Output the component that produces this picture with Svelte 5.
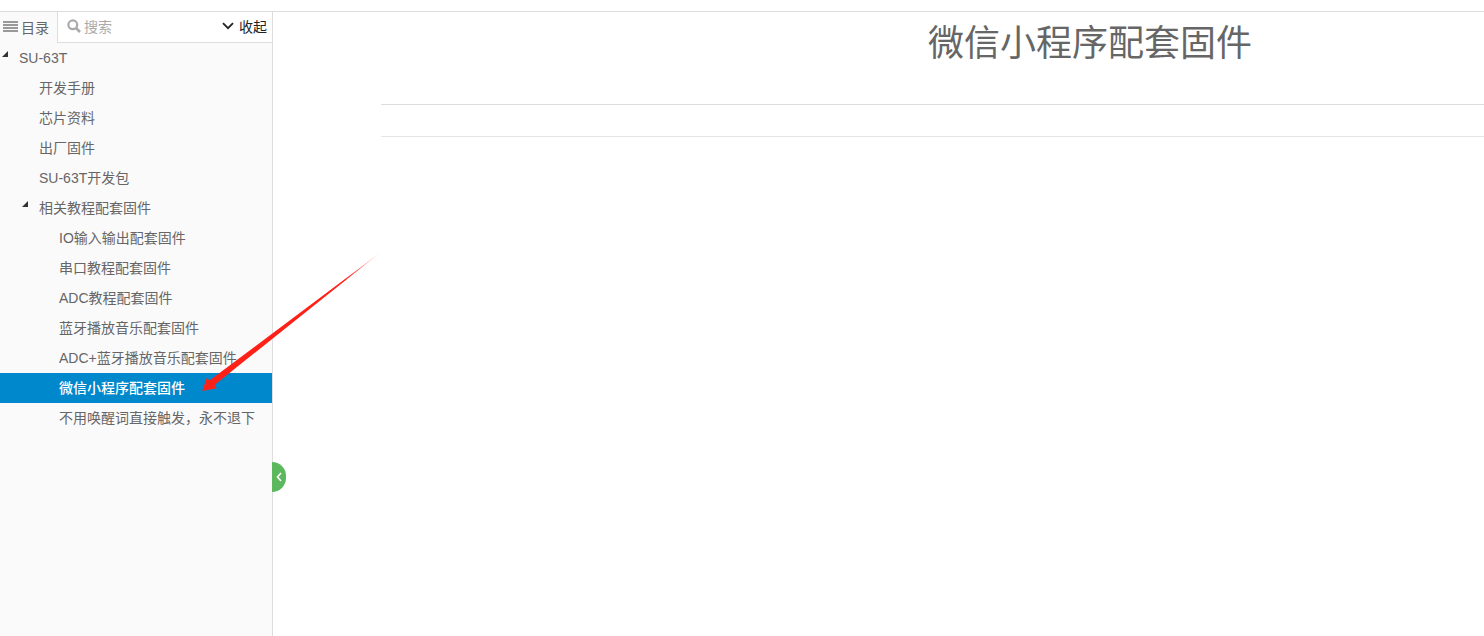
<script>
	const items = [
		{ label: 'SU-63T', level: 0, open: true },
		{ label: '开发手册', level: 1 },
		{ label: '芯片资料', level: 1 },
		{ label: '出厂固件', level: 1 },
		{ label: 'SU-63T开发包', level: 1 },
		{ label: '相关教程配套固件', level: 1, open: true },
		{ label: 'IO输入输出配套固件', level: 2 },
		{ label: '串口教程配套固件', level: 2 },
		{ label: 'ADC教程配套固件', level: 2 },
		{ label: '蓝牙播放音乐配套固件', level: 2 },
		{ label: 'ADC+蓝牙播放音乐配套固件', level: 2 },
		{ label: '微信小程序配套固件', level: 2, active: true },
		{ label: '不用唤醒词直接触发，永不退下', level: 2 }
	];
</script>

<div class="page">
	<aside class="sidebar">
		<div class="tabs">
			<div class="tab">
				<svg class="menu-icon" width="15" height="11" viewBox="0 0 15 11">
					<path d="M0 1h15M0 4h15M0 7h15M0 10h15" stroke="#999" stroke-width="2" />
				</svg>
				<span>目录</span>
			</div>
			<div class="search">
				<svg width="14" height="14" viewBox="0 0 14 14">
					<circle cx="5.8" cy="5.8" r="4.4" fill="none" stroke="#aaa" stroke-width="2.2" />
					<path d="M9 9l4 4" stroke="#aaa" stroke-width="2.6" />
				</svg>
				<span class="placeholder">搜索</span>
				<span class="collapse">
					<svg width="12" height="8" viewBox="0 0 12 8">
						<path d="M1 1.2l5 5 5-5" fill="none" stroke="#222" stroke-width="1.8" />
					</svg>
					收起
				</span>
			</div>
		</div>
		<ul class="tree">
			{#each items as item}
				<li class="node level-{item.level}" class:active={item.active}>
					{#if item.open}<i class="caret"></i>{/if}
					<span>{item.label}</span>
				</li>
			{/each}
		</ul>
		<div class="toggle">
			<svg width="6" height="10" viewBox="0 0 6 10">
				<path d="M5 1L1.5 5 5 9" fill="none" stroke="#fff" stroke-width="1.6" />
			</svg>
		</div>
	</aside>

	<main class="content">
		<h1>微信小程序配套固件</h1>
		<div class="meta"></div>
	</main>

	<svg class="arrow" width="190" height="150" viewBox="195 248 190 150">
		<defs>
			<linearGradient id="fade" gradientUnits="userSpaceOnUse" x1="381" y1="252" x2="345" y2="280">
				<stop offset="0" stop-color="#ff2018" stop-opacity="0.1" />
				<stop offset="1" stop-color="#ff2018" />
			</linearGradient>
		</defs>
		<path d="M381 252L214.5 385 216.7 388.3 202.3 391 206.7 378 209.5 380.5z" fill="url(#fade)" />
	</svg>
</div>

<style>
	:global(body) {
		margin: 0;
		background: #fff;
	}

	.page {
		position: relative;
		display: flex;
		height: 636px;
		padding-top: 11px;
		box-sizing: border-box;
		overflow: hidden;
		font-family: 'Liberation Sans', 'Noto Sans CJK SC', sans-serif;
		font-size: 14px;
		color: #666;
	}
	.page::before {
		content: '';
		position: absolute;
		top: 11px;
		left: 0;
		right: 0;
		height: 1px;
		background: #ddd;
	}

	.sidebar {
		position: relative;
		flex: 0 0 273px;
		box-sizing: border-box;
		margin-top: 1px;
		background: #fafafa;
		border-right: 1px solid #ddd;
	}

	.tabs {
		display: flex;
		height: 31px;
		box-sizing: border-box;
		background: #fff;
	}
	.tab {
		display: flex;
		align-items: center;
		gap: 3px;
		width: 57px;
		box-sizing: border-box;
		padding: 0 0 2px 3px;
		background: #fafafa;
	}
	.search {
		flex: 1;
		display: flex;
		align-items: center;
		padding: 0 5px 2px 9px;
		border-left: 1px solid #ddd;
		border-bottom: 1px solid #ddd;
	}
	.placeholder {
		margin-left: 3px;
		color: #aaa;
	}
	.collapse {
		display: flex;
		align-items: center;
		gap: 5px;
		margin-left: auto;
		font-size: 14px;
		color: #222;
	}

	.tree {
		list-style: none;
		margin: 0;
		padding: 0;
	}
	.node {
		position: relative;
		height: 30px;
		line-height: 30px;
		white-space: nowrap;
	}
	.level-0 { padding-left: 19px; }
	.level-1 { padding-left: 39px; }
	.level-2 { padding-left: 59px; }
	.node.active {
		background: #0088cc;
		color: #fff;
		font-weight: 500;
	}
	.caret {
		position: absolute;
		top: 8px;
		width: 0;
		height: 0;
		border-style: solid;
		border-width: 0 0 6px 6px;
		border-color: transparent transparent #333 transparent;
	}
	.level-0 .caret { left: 2px; }
	.level-1 .caret { left: 22px; }

	.toggle {
		position: absolute;
		top: 450px;
		left: 272px;
		display: flex;
		align-items: center;
		justify-content: center;
		width: 14px;
		height: 30px;
		border-radius: 0 15px 15px 0;
		background: #5cb85c;
	}

	.content {
		flex: 1;
		min-width: 0;
		margin-left: 108px;
		padding-top: 2px;
	}
	h1 {
		height: 92px;
		margin: 0;
		padding: 8px 0 0 547px;
		box-sizing: border-box;
		border-bottom: 1px solid #ddd;
		font-size: 36px;
		font-weight: 400;
		line-height: 46px;
		color: #666;
	}
	.meta {
		height: 32px;
		box-sizing: border-box;
		border-bottom: 1px solid #e6e6e6;
	}

	.arrow {
		position: absolute;
		left: 195px;
		top: 248px;
		pointer-events: none;
	}
</style>
